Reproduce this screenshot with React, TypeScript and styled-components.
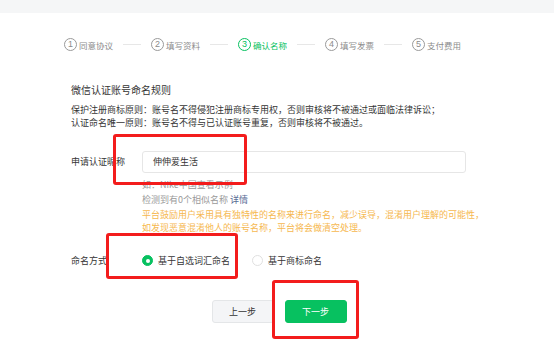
import { Fragment } from "react";
import styled, { createGlobalStyle } from "styled-components";

const GlobalStyle = createGlobalStyle`
  * { box-sizing: border-box; }
  body {
    margin: 0;
    background: #fff;
    font-family: "Noto Sans CJK SC", "Liberation Sans", sans-serif;
    color: #353535;
  }
`;

const Page = styled.div`
  position: relative;
  width: 554px;
  height: 343px;
  overflow: hidden;
`;

const TopBar = styled.div`
  height: 13px;
  background: #f5f6f7;
`;

const Steps = styled.ul`
  display: flex;
  align-items: center;
  margin: 0;
  padding: 25px 0 0 64px;
  list-style: none;
`;

const StepItem = styled.li<{ $active?: boolean }>`
  display: flex;
  align-items: center;
  gap: 2px;
  height: 13px;
  font-size: 8.5px;
  color: ${(p) => (p.$active ? "#07c160" : "#8c8c8c")};
`;

const StepNum = styled.span<{ $active?: boolean }>`
  display: flex;
  align-items: center;
  justify-content: center;
  width: 13px;
  height: 13px;
  border: 1px solid ${(p) => (p.$active ? "#07c160" : "#9a9a9a")};
  border-radius: 50%;
  font-family: "Liberation Sans", sans-serif;
  font-size: 9px;
  line-height: 1;
`;

const StepLine = styled.li`
  width: 18px;
  height: 1px;
  margin: 0 10px;
  background: #e7e7e7;
`;

const Content = styled.div`
  padding-left: 71px;
`;

const Title = styled.h3`
  margin: 32px 0 0;
  font-size: 10px;
  line-height: 14px;
  font-weight: normal;
  color: #353535;
`;

const Rules = styled.div`
  margin-top: 5.5px;
  font-size: 9px;
  line-height: 13px;
  color: #353535;
`;

const FormRow = styled.div<{ $top: number }>`
  display: flex;
  align-items: flex-start;
  margin-top: ${(p) => p.$top}px;
`;

const Label = styled.label<{ $h: number }>`
  width: 71px;
  flex-shrink: 0;
  font-size: 9px;
  line-height: ${(p) => p.$h}px;
  color: #353535;
`;

const Field = styled.div`
  display: flex;
  flex-direction: column;
`;

const Input = styled.div`
  width: 324px;
  height: 22px;
  padding-left: 10px;
  border: 1px solid #e6e6e6;
  border-radius: 3px;
  font-size: 9px;
  line-height: 20px;
  color: #353535;
`;

const Hint = styled.p<{ $top?: number }>`
  margin: ${(p) => p.$top ?? 3.5}px 0 0;
  font-size: 9px;
  line-height: 15px;
  color: #9a9a9a;
`;

const Link = styled.a`
  color: #576b95;
  text-decoration: none;
`;

const Warn = styled.p`
  margin: 1.5px 0 0;
  font-size: 9px;
  line-height: 13px;
  color: #f6b850;
`;

const RadioGroup = styled.div`
  display: flex;
  align-items: center;
  gap: 22px;
  height: 14px;
`;

const RadioOption = styled.span`
  display: flex;
  align-items: center;
  gap: 5px;
  font-size: 9px;
  color: #353535;
`;

const RadioDot = styled.span<{ $checked?: boolean }>`
  display: flex;
  align-items: center;
  justify-content: center;
  width: 11px;
  height: 11px;
  border-radius: 50%;
  border: 1px solid ${(p) => (p.$checked ? "#07c160" : "#e0e0e0")};
  background: ${(p) => (p.$checked ? "#07c160" : "#fff")};
  &::after {
    content: "";
    display: ${(p) => (p.$checked ? "block" : "none")};
    width: 4px;
    height: 4px;
    border-radius: 50%;
    background: #fff;
  }
`;

const Buttons = styled.div`
  display: flex;
  justify-content: center;
  gap: 11px;
  margin-top: 32px;
  padding-left: 4px;
`;

const Button = styled.button<{ $primary?: boolean }>`
  width: 62px;
  height: 23px;
  border-radius: 3px;
  border: 1px solid ${(p) => (p.$primary ? "#07c160" : "#e4e6e8")};
  background: ${(p) => (p.$primary ? "#07c160" : "#f4f5f7")};
  color: ${(p) => (p.$primary ? "#fff" : "#353535")};
  font-family: inherit;
  font-size: 9px;
  padding: 0;
`;

const Mark = styled.div<{ $x: number; $y: number; $w: number; $h: number }>`
  position: absolute;
  left: ${(p) => p.$x}px;
  top: ${(p) => p.$y}px;
  width: ${(p) => p.$w}px;
  height: ${(p) => p.$h}px;
  border: 3px solid #f31c1c;
  border-radius: 3px;
  pointer-events: none;
`;

const steps = ["同意协议", "填写资料", "确认名称", "填写发票", "支付费用"];

export default function App() {
  return (
    <Page>
      <GlobalStyle />
      <TopBar />
      <Steps>
        {steps.map((s, i) => (
          <Fragment key={s}>
            {i > 0 && <StepLine />}
            <StepItem $active={i === 2}>
              <StepNum $active={i === 2}>{i + 1}</StepNum>
              {s}
            </StepItem>
          </Fragment>
        ))}
      </Steps>
      <Content>
        <Title>微信认证账号命名规则</Title>
        <Rules>
          <div>保护注册商标原则：账号名不得侵犯注册商标专用权，否则审核将不被通过或面临法律诉讼；</div>
          <div>认证命名唯一原则：账号名不得与已认证账号重复，否则审核将不被通过。</div>
        </Rules>
        <FormRow $top={22.5}>
          <Label $h={22}>申请认证昵称</Label>
          <Field>
            <Input>伸伸爱生活</Input>
            <Hint>如：Nike中国查看示例</Hint>
            <Hint $top={0}>
              检测到有0个相似名称 <Link>详情</Link>
            </Hint>
            <Warn>
              平台鼓励用户采用具有独特性的名称来进行命名，减少误导，混淆用户理解的可能性，
              <br />
              如发现恶意混淆他人的账号名称，平台将会做清空处理。
            </Warn>
          </Field>
        </FormRow>
        <FormRow $top={19.5}>
          <Label $h={14}>命名方式</Label>
          <RadioGroup>
            <RadioOption>
              <RadioDot $checked />
              基于自选词汇命名
            </RadioOption>
            <RadioOption>
              <RadioDot />
              基于商标命名
            </RadioOption>
          </RadioGroup>
        </FormRow>
      </Content>
      <Buttons>
        <Button>上一步</Button>
        <Button $primary>下一步</Button>
      </Buttons>
      <Mark $x={113} $y={134} $w={134} $h={51} />
      <Mark $x={106} $y={233} $w={132} $h={46} />
      <Mark $x={272} $y={280} $w={87} $h={59} />
    </Page>
  );
}
